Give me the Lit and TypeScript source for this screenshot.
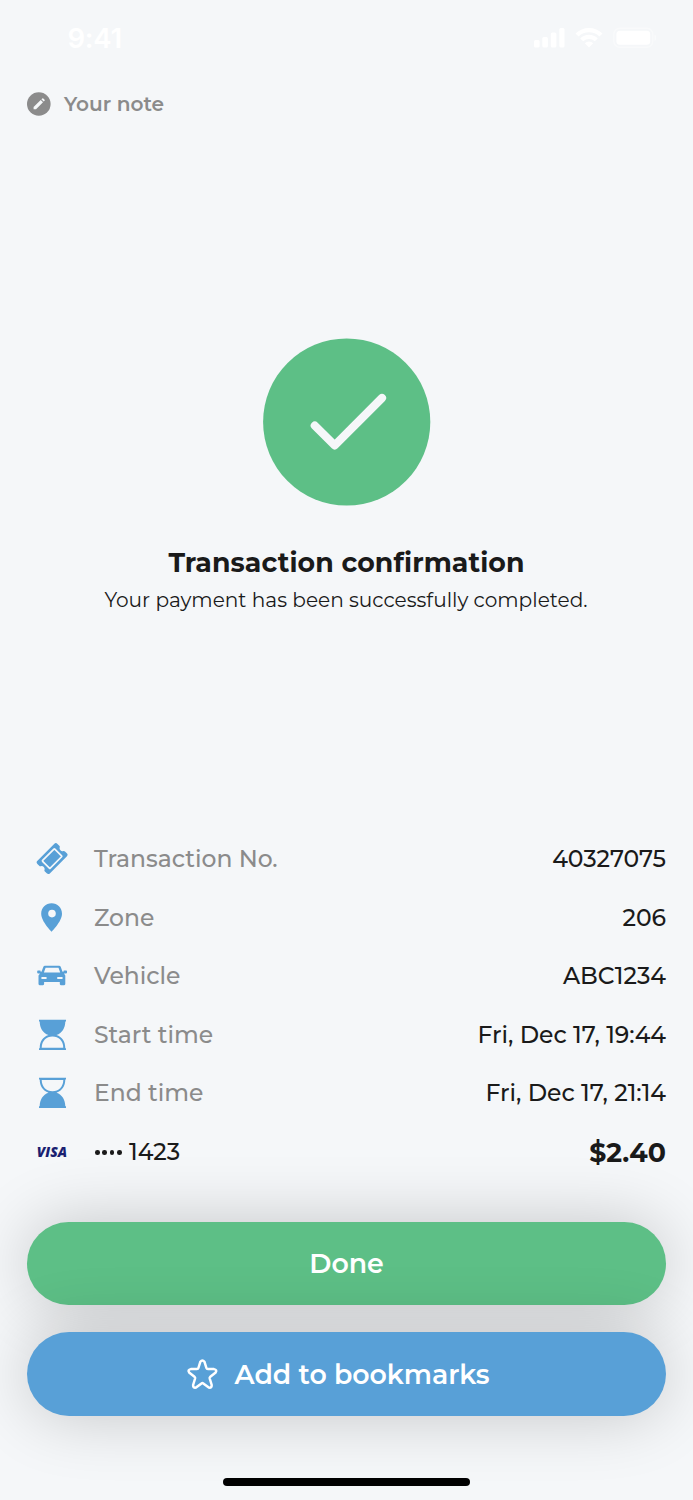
import { LitElement, html, svg, css } from "lit";

interface Detail {
  icon: unknown;
  label: string;
  value: string;
}

const ticket = svg`
  <g transform="translate(16.1 15.6) rotate(-45)">
    <path fill="#58a0d7" d="M-11.8 -8.9H11.8Q14.2 -8.9 14.2 -6.6V-4Q14.2 -3 13.4 -2.6A2.9 2.9 0 0 0 13.4 2.6Q14.2 3 14.2 4V6.6Q14.2 8.9 11.8 8.9H-11.8Q-14.2 8.9 -14.2 6.6V4Q-14.2 3 -13.4 2.6A2.9 2.9 0 0 0 -13.4 -2.6Q-14.2 -3 -14.2 -4V-6.6Q-14.2 -8.9 -11.8 -8.9Z"/>
    <rect x="-8.6" y="-5.4" width="17.2" height="10.8" rx="0.6" fill="none" stroke="#f5f7f9" stroke-width="1.7"/>
  </g>`;
const pin = svg`<path fill="#58a0d7" fill-rule="evenodd" d="M15.6 1.3C9.8 1.3 5.2 5.9 5.2 11.7C5.2 19.5 15.6 29.7 15.6 29.7S26 19.5 26 11.7C26 5.9 21.4 1.3 15.6 1.3ZM16 7.8A3.8 3.8 0 1 1 16 15.4A3.8 3.8 0 1 1 16 7.8Z"/>`;
const car = svg`
  <path fill="#58a0d7" fill-rule="evenodd" d="M9 5.7H23Q24.3 5.7 24.7 6.8L26.4 11.4L27.4 12V11.2Q27.4 10.4 28.2 10.4H30.2Q31 10.4 31 11.2V12.4Q31 13.4 30 13.4H28L29.3 15.6V24.1Q29.3 25.2 28.2 25.2H24.9Q23.8 25.2 23.8 24.1V22.1H8.1V24.1Q8.1 25.2 7 25.2H3.6Q2.5 25.2 2.5 24.1V15.6L4 13.4H2.2Q1.2 13.4 1.2 12.4V11.2Q1.2 10.4 2 10.4H4Q4.7 10.4 4.7 11.2V12L5.6 11.4L7.4 6.8Q7.8 5.7 9 5.7ZM9.6 7.7L7.9 12.4H24.2L22.5 7.7ZM6.2 17Q5.2 17 5.2 18T6.2 19H9.8Q10.8 19 10.8 18T9.8 17ZM22 17Q21 17 21 18T22 19H25.8Q26.8 19 26.8 18T25.8 17Z"/>`;
const hourglassFull = svg`
  <path fill="#58a0d7" d="M3 .8H30V2.6H29.3C29.3 9 26.2 14.2 20.5 16.1C26.2 17.9 29.3 22.8 29.3 29.2H30V31H3V29.2H3.7C3.7 22.8 6.8 17.9 12.5 16.1C6.8 14.2 3.7 9 3.7 2.6H3Z"/>
  <path fill="#f5f7f9" d="M5.7 28.8C5.8 22 10.2 17.6 16.5 17.6S27.2 22 27.3 28.8Z"/>`;
const hourglassEmpty = svg`<g transform="translate(0 31.8) scale(1 -1)">${hourglassFull}</g>`;

const icon = (shape: unknown) => html`<svg class="icon" viewBox="0 0 32 32" width="32" height="32">${shape}</svg>`;

const details: Detail[] = [
  { icon: ticket, label: "Transaction No.", value: "40327075" },
  { icon: pin, label: "Zone", value: "206" },
  { icon: car, label: "Vehicle", value: "ABC1234" },
  { icon: hourglassFull, label: "Start time", value: "Fri, Dec 17, 19:44" },
  { icon: hourglassEmpty, label: "End time", value: "Fri, Dec 17, 21:14" },
];

class AppRoot extends LitElement {
  static styles = css`
    :host {
      display: flex;
      flex-direction: column;
      box-sizing: border-box;
      width: 693px;
      height: 1500px;
      overflow: hidden;
      background: #f5f7f9;
      color: #1a1a1a;
      font-family: Montserrat, Inter, "Open Sans", sans-serif;
      font-size: 23.45px;
      font-weight: 500;
      font-variant-ligatures: none;
      white-space: nowrap;
    }
    .icon { display: block; flex: none; }
    .status {
      height: 76px;
      padding: 0 37px 0 67px;
      display: flex;
      align-items: center;
      justify-content: space-between;
      box-sizing: border-box;
      color: #fff;
    }
    .clock { font: 600 27.5px/34px Inter, sans-serif; letter-spacing: -0.3px; padding-left: 0.5px; margin-top: -1px; }
    .signals { margin-top: -2px; }
    .note {
      display: flex;
      align-items: center;
      gap: 13px;
      height: 56px;
      padding-left: 27px;
      color: #8b8b8b;
      font-size: 20.1px;
      font-weight: 600;
    }
    .note span { margin-top: -1px; }
    .result {
      display: flex;
      flex-direction: column;
      align-items: center;
      padding-top: 206px;
      height: 491.7px;
    }
    .title { margin: 38px 0 0; font-size: 26.8px; line-height: 38px; font-weight: 700; letter-spacing: 0.08px; }
    .message { margin: 4px 0 0; padding-right: 1px; font-size: 20.1px; line-height: 28px; font-weight: 400; }
    .details { padding: 0 27px 0 36px; }
    .row { display: flex; align-items: center; height: 58.5px; }
    .row .icon { margin-top: 1px; }
    .label { margin-left: 26px; color: #8b8b8b; }
    .value { margin-left: auto; }
    .visa {
      width: 32px;
      text-align: center;
      font: italic 800 13.8px/16px "Open Sans", sans-serif;
      color: #1a1f71;
      padding-top: 1px;
    }
    .card { display: flex; align-items: center; margin-left: 27px; gap: 7.2px; }
    .dots { display: flex; gap: 2.7px; }
    .dot { width: 4.7px; height: 4.7px; border-radius: 50%; background: #1a1a1a; margin-top: 2px; }
    .total { margin-left: auto; font-size: 26.8px; font-weight: 700; padding-top: 2px; }
    .actions { display: flex; flex-direction: column; gap: 26.6px; padding: 41.1px 27px 0; }
    .button {
      display: flex;
      align-items: center;
      justify-content: center;
      height: 83.7px;
      border: 0;
      padding: 0;
      border-radius: 42px;
      color: #fff;
      font: inherit;
      font-size: 26.8px;
      font-weight: 600;
      font-variant-ligatures: none;
      box-shadow: 0 0 67px rgba(0, 0, 0, 0.2);
    }
    .done { background: #5dbf86; }
    .bookmark { background: #58a0d7; gap: 16px; padding: 1px 17px 0 0; }
    .bookmark span { letter-spacing: -0.03px; }
    .home { width: 247px; height: 8.6px; border-radius: 5px; background: #000; margin: 62px auto 0; }
  `;

  render() {
    return html`
      <div class="status">
        <span class="clock">9:41</span>
        <svg class="signals" width="122" height="22" viewBox="0 0 122 22" fill="#fff">
          <rect x="0" y="14" width="5.6" height="7.6" rx="1.5"/>
          <rect x="8.3" y="11" width="5.6" height="10.6" rx="1.5"/>
          <rect x="16.8" y="6.5" width="5.6" height="15.1" rx="1.5"/>
          <rect x="25.3" y="2" width="5.2" height="19.6" rx="1.5"/>
          <path d="M41.5 7.4A19.5 19.5 0 0 1 68.5 7.4L65.4 10.4A15 15 0 0 0 44.6 10.4ZM46.2 12.4A12.7 12.7 0 0 1 63.8 12.4L60.8 15.3A8.4 8.4 0 0 0 49.2 15.3ZM50.8 17.3A6 6 0 0 1 59.2 17.3L55 21.6Z"/>
          <rect x="79.8" y="2.3" width="39" height="19" rx="6" fill="none" stroke="#fff" stroke-width="1.4" opacity=".4"/>
          <rect x="82.4" y="4.8" width="33.8" height="14" rx="3.6"/>
          <path d="M120.5 8.5Q122.6 9.6 122.6 11.8T120.5 15Z" opacity=".45"/>
        </svg>
      </div>
      <div class="note">
        <svg class="icon" width="24" height="24" viewBox="0 0 24 24">
          <circle cx="11.8" cy="12" r="11.8" fill="#8b8b8b"/>
          <path fill="#f5f7f9" d="M6.6 15L13.7 8L16 10.3L9 17.3H6.6ZM14.4 7.3L15.3 6.5Q15.8 6 16.3 6.5L17.6 7.7Q18 8.2 17.6 8.7L16.7 9.6Z"/>
        </svg>
        <span>Your note</span>
      </div>
      <div class="result">
        <svg class="icon" width="168" height="168" viewBox="0 0 168 168">
          <circle cx="83.7" cy="84" r="83.6" fill="#5dbf86"/>
          <path d="M51.8 87.6L71.7 107.4L119 60" fill="none" stroke="#f5f7f9" stroke-width="8.2" stroke-linecap="round" stroke-linejoin="round"/>
        </svg>
        <h1 class="title">Transaction confirmation</h1>
        <p class="message">Your payment has been successfully completed.</p>
      </div>
      <div class="details">
        ${details.map(
          (d) => html`<div class="row">
            ${icon(d.icon)}
            <span class="label">${d.label}</span>
            <span class="value">${d.value}</span>
          </div>`
        )}
        <div class="row">
          <span class="visa">VISA</span>
          <span class="card"><span class="dots">${[0, 1, 2, 3].map(() => html`<i class="dot"></i>`)}</span>1423</span>
          <span class="total">$2.40</span>
        </div>
      </div>
      <div class="actions">
        <button class="button done">Done</button>
        <button class="button bookmark">
          <svg class="icon" width="32" height="32" viewBox="0 0 32 32">
            <path d="M13.9 3.4Q16 .8 18.1 3.4L20 9.6Q20.3 10.7 21.5 10.7H27.6Q31 11.4 29.3 14L23.9 18.3Q23 19 23.3 20.1L25.3 26.6Q25.4 29.8 22.4 29.1L16.9 25Q16 24.3 15.1 25L9.6 29.1Q6.6 29.8 6.7 26.6L8.7 20.1Q9 19 8.1 18.3L2.7 14Q1 11.4 4.4 10.7H10.5Q11.7 10.7 12 9.6Z" transform="translate(.4 .4)" fill="none" stroke="#fff" stroke-width="2.5" stroke-linejoin="round"/>
          </svg>
          <span>Add to bookmarks</span>
        </button>
      </div>
      <div class="home"></div>
    `;
  }
}

customElements.define("app-root", AppRoot);
